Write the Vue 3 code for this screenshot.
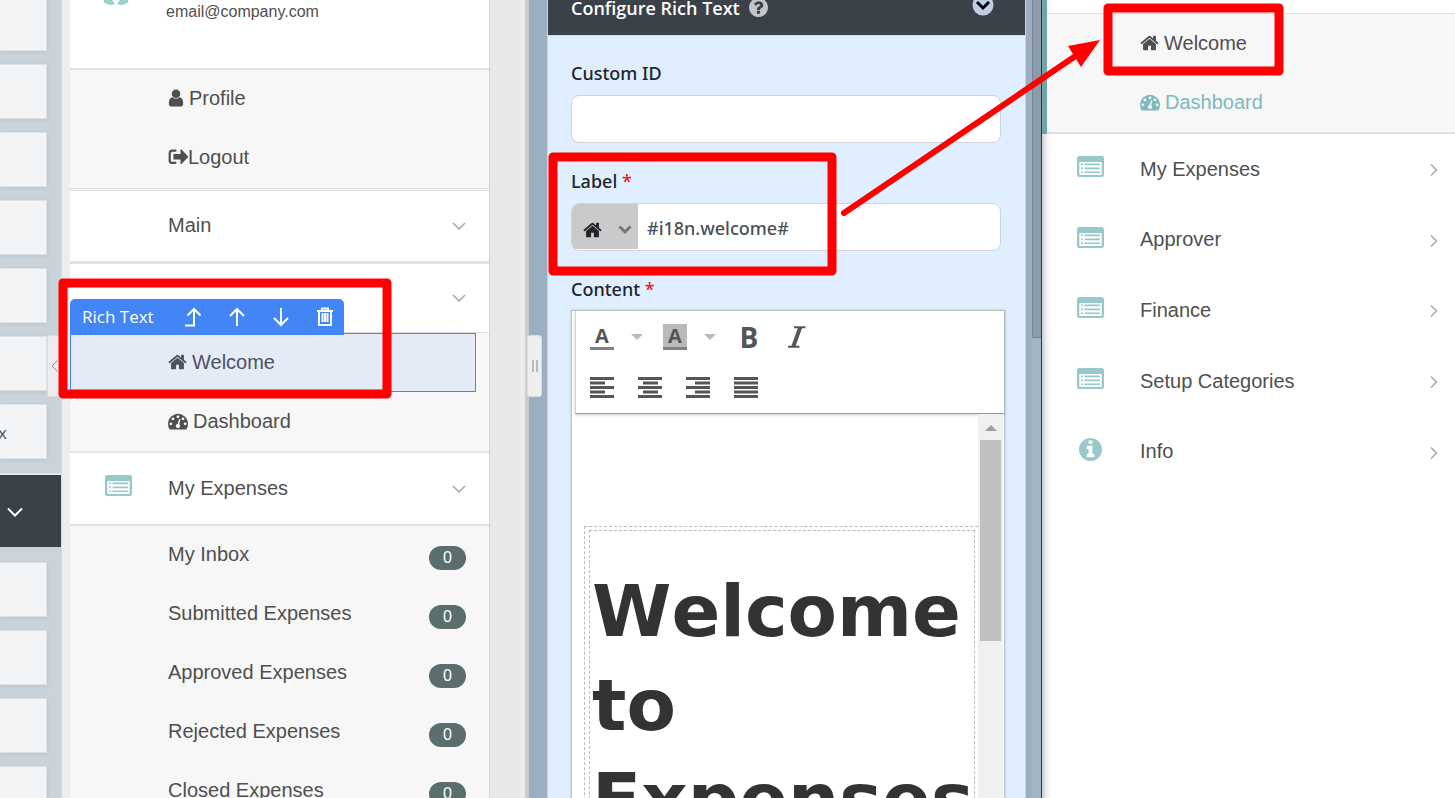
<script setup>
import { ref } from 'vue'

const faCircle = 'm384 192q0 209-103 385.5t-279.5 279.5-385.5 103-385.5-103-279.5-279.5-103-385.5 103-385.5 279.5-279.5 385.5-103 385.5 103 279.5 279.5 103 385.5z'
const icons = {
  home: { box: '64 0 1664 1792', w: 19, d: 'M1472 992v480q0 26-19 45t-45 19h-384v-384h-256v384h-384q-26 0-45-19t-19-45v-480q0-1 .5-3t.5-3l575-474 575 474q1 2 1 6zm223-69l-62 74q-8 9-21 11h-3q-13 0-21-7l-692-577-692 577q-12 8-24 7-13-2-21-11l-62-74q-8-10-7-23.5t11-21.5l719-599q32-26 76-26t76 26l244 204v-195q0-14 9-23t23-9h192q14 0 23 9t9 23v408l219 182q10 8 11 21.5t-7 23.5z' },
  user: { box: '256 0 1280 1792', w: 16, d: 'M1536 1399q0 109-62.5 187t-150.5 78h-854q-88 0-150.5-78t-62.5-187q0-85 8.5-160.5t31.5-152 58.5-131 94-89 134.5-34.5q131 128 313 128t313-128q76 0 134.5 34.5t94 89 58.5 131 31.5 152 8.5 160.5zm-256-887q0 159-112.5 271.5t-271.5 112.5-271.5-112.5-112.5-271.5 112.5-271.5 271.5-112.5 271.5 112.5 112.5 271.5z' },
  gauge: { box: '0 0 1792 1792', w: 20, d: 'M384 1152q0-53-37.5-90.5t-90.5-37.5-90.5 37.5-37.5 90.5 37.5 90.5 90.5 37.5 90.5-37.5 37.5-90.5zm192-448q0-53-37.5-90.5t-90.5-37.5-90.5 37.5-37.5 90.5 37.5 90.5 90.5 37.5 90.5-37.5 37.5-90.5zm428 481l101-382q6-26-7.5-48.5t-38.5-29.5-48 6.5-30 39.5l-101 382q-60 5-107 43.5t-63 98.5q-20 77 20 146t117 89 146-20 89-117q16-60-6-117t-72-91zm660-33q0-53-37.5-90.5t-90.5-37.5-90.5 37.5-37.5 90.5 37.5 90.5 90.5 37.5 90.5-37.5 37.5-90.5zm-640-640q0-53-37.5-90.5t-90.5-37.5-90.5 37.5-37.5 90.5 37.5 90.5 90.5 37.5 90.5-37.5 37.5-90.5zm448 192q0-53-37.5-90.5t-90.5-37.5-90.5 37.5-37.5 90.5 37.5 90.5 90.5 37.5 90.5-37.5 37.5-90.5zm320 448q0 261-141 483-19 29-54 29h-1402q-35 0-54-29-141-221-141-483 0-182 71-348t191-286 286-191 348-71 348 71 286 191 191 286 71 348z' },
  info: { box: '128 128 1536 1536', d: 'M1152 1376v-160q0-14-9-23t-23-9h-96v-512q0-14-9-23t-23-9h-320q-14 0-23 9t-9 23v160q0 14 9 23t23 9h96v320h-96q-14 0-23 9t-9 23v160q0 14 9 23t23 9h448q14 0 23-9t9-23zm-128-896v-160q0-14-9-23t-23-9h-192q-14 0-23 9t-9 23v160q0 14 9 23t23 9h192q14 0 23-9t9-23zm640 416q0 209-103 385.5t-279.5 279.5-385.5 103-385.5-103-279.5-279.5-103-385.5 103-385.5 279.5-279.5 385.5-103 385.5 103 279.5 279.5 103 385.5z' },
  help: { box: '128 128 1536 1536', d: 'M1024 1376v-192q0-14-9-23t-23-9h-192q-14 0-23 9t-9 23v192q0 14 9 23t23 9h192q14 0 23-9t9-23zm256-672q0-88-55.5-163t-138.5-116-170-41q-243 0-371 213-15 24 8 42l132 100q7 6 19 6 16 0 25-12 53-68 86-92 34-24 86-24 48 0 85.5 26t37.5 59q0 38-20 61t-68 45q-63 28-115.5 86.5t-52.5 125.5v36q0 14 9 23t23 9h192q14 0 23-9t9-23q0-19 21.5-49.5t54.5-49.5q32-18 49-28.5t46-35 44.5-48 28-60.5 12.5-81z' + faCircle },
}

const upperCards = ['', '', '', '', '', '', 'x']
const lowerCards = ['', '', '', '']
const inboxes = ['My Inbox', 'Submitted Expenses', 'Approved Expenses', 'Rejected Expenses', 'Closed Expenses']
const previewItems = [
  { name: 'My Expenses', icon: 'list' },
  { name: 'Approver', icon: 'list' },
  { name: 'Finance', icon: 'list' },
  { name: 'Setup Categories', icon: 'list' },
  { name: 'Info', icon: 'info' },
]
const aligns = [
  { name: 'Align left', x: 0, w: 15 },
  { name: 'Align center', x: 5, w: 15 },
  { name: 'Align right', x: 9, w: 15 },
  { name: 'Justify', x: 0, w: 24 },
]
const customId = ref('')
const label = ref('#i18n.welcome#')
</script>

<template>
  <div class="app">
    <svg class="defs" aria-hidden="true">
      <symbol id="i-list" viewBox="0 0 27 21">
        <path fill-rule="evenodd" d="M2.5 0h22A2.500 2.500 0 0 1 27 2.500v16A2.500 2.500 0 0 1 24.500 21h-22A2.500 2.500 0 0 1 0 18.500v-16A2.500 2.500 0 0 1 2.500 0zM3 6q-.7 0-.7.7v11.600q0 .7.7.7h21q.7 0 .7-.7V6.700q0-.7-.7-.7z" />
        <path d="M4 7.600h2v1.700H4zM7.500 7.600H23v1.700H7.500zM4 11.600h2v1.700H4zM7.500 11.600H23v1.700H7.500zM4 15.400h2v1.700H4zM7.500 15.400H23v1.700H7.500z" />
      </symbol>
      <symbol id="i-down" viewBox="0 0 14 8">
        <path d="M1 1l6 6 6-6" fill="none" stroke="currentColor" stroke-width="1.500" />
      </symbol>
    </svg>

    <aside class="palette">
      <div v-for="(c, i) in upperCards" :key="'u' + i" class="card">{{ c }}</div>
      <button class="group" aria-label="Toggle group">
        <svg width="16" height="10" viewBox="0 0 16 10"><path d="M1 1.500l7 7 7-7" fill="none" stroke="#fff" stroke-width="2" /></svg>
      </button>
      <div v-for="(c, i) in lowerCards" :key="'l' + i" class="card">{{ c }}</div>
      <button class="collapse" aria-label="Collapse palette">
        <svg width="7" height="12" viewBox="0 0 7 12"><path d="M6.500.5L1 6l5.500 5.500" fill="none" stroke="#888" /></svg>
      </button>
    </aside>

    <main class="builder">
      <nav class="phone">
        <div class="account">
          <svg class="avatar" width="24" height="6" viewBox="0 0 24 6"><path d="M0 0h8l3 4-3 1Q3 4.500 0 2.500zM24 0h-8l-3 4 3 1q5-.5 8-2.500z" /></svg>
          <span>email@company.com</span>
        </div>
        <div class="sub first">
          <a href="#" class="item gap"><svg :width="icons.user.w" height="20" :viewBox="icons.user.box"><path :d="icons.user.d" /></svg>Profile</a>
          <a href="#" class="item"><svg width="20" height="16" viewBox="0 0 20 16"><path d="M7.500 1.700H4A2.300 2.300 0 0 0 1.700 4v7.500A2.300 2.300 0 0 0 4 13.800h3.500" fill="none" stroke="currentColor" stroke-width="2.200" stroke-linecap="round" /><path d="M6 5h6.500V1q0-1 1-.5L20 7.200q.3.500 0 1L13.500 15q-1 .5-1-.5v-4H6q-.6 0-.6-.6V5.600Q5.400 5 6 5z" /></svg>Logout</a>
        </div>
        <a href="#" class="section thick">Main<svg class="chev" width="14" height="8"><use href="#i-down" /></svg></a>
        <a href="#" class="section short" aria-label="Section"><svg class="chev" width="14" height="8"><use href="#i-down" /></svg></a>
        <div class="sub second">
          <div class="selected">
            <div class="tools">
              <span>Rich Text</span>
              <button aria-label="Select parent"><svg width="18" height="20" viewBox="0 0 18 20"><path d="M1 18.500h9V2M3.500 8.500L10 2l6.500 6.500" /></svg></button>
              <button aria-label="Move up"><svg width="18" height="20" viewBox="0 0 18 20"><path d="M9 19V2M2 9l7-7 7 7" /></svg></button>
              <button aria-label="Move down"><svg width="18" height="20" viewBox="0 0 18 20"><path d="M9 1v17M2 11l7 7 7-7" /></svg></button>
              <button aria-label="Delete"><svg width="18" height="20" viewBox="0 0 18 20"><path d="M1 4h16M6 3V1.500h6V3M3 4v14h12V4M6.500 6v9M9 6v9M11.500 6v9" /></svg></button>
            </div>
            <a href="#" class="item gap"><svg :width="icons.home.w" height="20" :viewBox="icons.home.box"><path :d="icons.home.d" /></svg>Welcome</a>
          </div>
          <a href="#" class="item gap"><svg :width="icons.gauge.w" height="20" :viewBox="icons.gauge.box"><path :d="icons.gauge.d" /></svg>Dashboard</a>
        </div>
        <a href="#" class="section mid"><svg class="lead" width="27" height="21"><use href="#i-list" /></svg>My Expenses<svg class="chev" width="14" height="8"><use href="#i-down" /></svg></a>
        <div class="sub third">
          <a v-for="n in inboxes" :key="n" href="#" class="item">{{ n }}<span class="badge">0</span></a>
        </div>
      </nav>
      <div class="gutter"></div>
    </main>

    <section class="config">
      <button class="splitter" aria-label="Resize panel"><i></i><i></i></button>
      <div class="panel">
        <header>
          <h2>Configure Rich Text</h2>
          <svg class="help" width="19" height="19" :viewBox="icons.help.box"><path :d="icons.help.d" /></svg>
          <button class="toggle" aria-label="Collapse section"><svg width="22" height="22" viewBox="0 0 22 22"><circle cx="11" cy="11" r="10.500" fill="#bcd0e5" /><path d="M5 8l6 6 6-6" fill="none" stroke="#000" stroke-width="3" /></svg></button>
        </header>
        <form @submit.prevent>
          <div class="field">
            <label for="cid">Custom ID</label>
            <input id="cid" v-model="customId" class="box" type="text" />
          </div>
          <div class="field">
            <label for="lbl">Label <b>*</b></label>
            <div class="box combo">
              <button type="button" aria-label="Choose icon">
                <svg class="dark" :width="icons.home.w" height="20" :viewBox="icons.home.box"><path :d="icons.home.d" /></svg>
                <svg width="14" height="10" viewBox="0 0 14 10"><path d="M1.500 1.500L7 7l5.500-5.500" fill="none" stroke="#777" stroke-width="3" /></svg>
              </button>
              <input id="lbl" v-model="label" type="text" />
            </div>
          </div>
          <div class="field grow">
            <label for="content">Content <b>*</b></label>
            <div class="editor">
              <div class="bar">
                <div class="line">
                  <button type="button" class="ink" aria-label="Text color">A</button>
                  <button type="button" class="caret" aria-label="Text color options"></button>
                  <button type="button" class="ink fill" aria-label="Background color">A</button>
                  <button type="button" class="caret" aria-label="Background color options"></button>
                  <button type="button" class="bold">B</button>
                  <button type="button" class="ital" aria-label="Italic">
                    <svg width="20" height="22" viewBox="0 0 20 22"><path d="M7 1.200h11.500M1 20.800h11.500" stroke="currentColor" stroke-width="2" /><path d="M11.200 1h4.200L8.300 21H4.100z" /></svg>
                  </button>
                </div>
                <div class="line aligns">
                  <button v-for="a in aligns" :key="a.name" type="button" :aria-label="a.name">
                    <svg width="24" height="21" viewBox="0 0 24 21">
                      <path d="M0 0h24v3H0zM0 9h24v3H0zM0 18h24v3H0z" />
                      <path :d="`M${a.x} 4.500h${a.w}v3h-${a.w}zM${a.x} 13.500h${a.w}v3h-${a.w}z`" />
                    </svg>
                  </button>
                </div>
              </div>
              <div class="canvas">
                <div id="content" class="doc">
                  <div class="outer"><div class="inner"><h1>Welcome to Expenses</h1></div></div>
                </div>
                <div class="scroll"><span class="up"></span><span class="thumb"></span></div>
              </div>
            </div>
          </div>
        </form>
      </div>
      <div class="track"><span></span></div>
    </section>

    <nav class="preview">
      <div class="open">
        <a href="#" class="item gap"><svg :width="icons.home.w" height="20" :viewBox="icons.home.box"><path :d="icons.home.d" /></svg>Welcome</a>
        <a href="#" class="item gap active"><svg :width="icons.gauge.w" height="20" :viewBox="icons.gauge.box"><path :d="icons.gauge.d" /></svg>Dashboard</a>
      </div>
      <div class="list">
        <a v-for="p in previewItems" :key="p.name" href="#" class="section">
          <svg v-if="p.icon === 'list'" class="lead" width="27" height="21"><use href="#i-list" /></svg>
          <svg v-else class="lead" width="27" height="23" :viewBox="icons.info.box"><path :d="icons.info.d" /></svg>
          {{ p.name }}
          <svg class="chev" width="8" height="12" viewBox="0 0 8 12"><path d="M1 .5L6.500 6 1 11.500" fill="none" stroke="currentColor" stroke-width="1.500" /></svg>
        </a>
      </div>
    </nav>

    <svg class="marks" viewBox="0 0 1455 798" preserveAspectRatio="xMinYMin meet" aria-hidden="true">
      <g fill="none" stroke="#f00" stroke-width="9" stroke-linejoin="round">
        <rect x="63" y="283" width="324" height="111" />
        <rect x="553" y="157" width="279" height="114" />
        <rect x="1108" y="8" width="171" height="63" />
      </g>
      <path d="M844 213L1077 55" stroke="#f00" stroke-width="6" stroke-linecap="round" />
      <path d="M1100 40L1068 46L1081 67z" fill="#f00" />
    </svg>
  </div>
</template>

<style>
body { margin: 0; }
</style>

<style scoped>
* { box-sizing: border-box; }
.app { position: relative; display: grid; grid-template-columns: 62px 467fr 513fr 413fr; height: 100vh; overflow: hidden; background: #fff; font-family: "Liberation Sans", Arial, sans-serif; color: #4f4f4f; }
button { padding: 0; border: 0; background: none; font: inherit; color: inherit; }
a { color: inherit; text-decoration: none; }
svg { flex: none; fill: currentColor; }
.defs { position: absolute; width: 0; height: 0; }
.marks { position: absolute; left: 0; top: 0; width: 100%; z-index: 5; pointer-events: none; }

.palette { position: relative; margin-top: -4px; background: #cbd3da; border-right: 1px solid #d9dbdc; }
.card { height: 55px; width: 47px; margin-bottom: 13px; background: #f3f4f6; border: 1px solid #dfe2e4; border-left: 0; box-shadow: 0 1px 4px rgba(0, 0, 0, 0.08); font: 17px/55px "Open Sans", sans-serif; color: #4a4f55; text-indent: -2px; }
.group { display: flex; align-items: center; width: 61px; height: 74px; margin: 14px 0 15px; padding: 1px 0 0 7px; background: #3a4148; border-top: 2px solid #e6eaee; }
.collapse { position: absolute; left: 47px; top: 339px; width: 15px; height: 62px; display: flex; align-items: center; padding-left: 3px; background: #ededed; border: 1px solid #ddd; border-right: 0; border-radius: 3px 0 0 3px; }

.builder { min-width: 0; display: flex; padding-left: 8px; background: #ededed; }
.phone { flex: 1; background: #fff; border-right: 1px solid #cdd5d5; font-size: 20px; }
.gutter { width: 39px; background: linear-gradient(90deg, #e8e8e8 0 30px, #ececec 31px 34px, #dcdcdc 35px, #cacaca 36px 39px); }
.account { position: relative; height: 68px; padding: 3px 0 0 96px; font-size: 16px; line-height: 18px; }
.avatar { position: absolute; left: 34px; top: 0; color: #9bd0c9; }
.sub { background: #f7f7f7; }
.first { border-top: 2px solid #dfdfdf; border-bottom: 3px double #dcdcdc; }
.second { border-top: 1px solid #dfdfdf; border-bottom: 2px solid #e5e5e5; }
.third { border-top: 2px solid #e2e2e2; }
.item { display: flex; align-items: center; height: 59px; padding: 0 0 3px 98px; font-size: 20px; }
.second .item, .open .item { padding-bottom: 1px; }
.gap { gap: 5px; }
.section { position: relative; display: flex; align-items: center; height: 72px; padding: 0 0 2px 98px; font-size: 20px; }
.thick { height: 73px; border-bottom: 3px solid #e3e3e3; }
.short { height: 68px; }
.mid { height: 71px; padding-bottom: 1px; }
.chev { position: absolute; right: 23px; margin-top: 2px; color: #a8a8a8; }
.lead { position: absolute; left: 35px; margin-bottom: 5px; color: #97c8ca; }
.badge { margin: 7px 23px 0 auto; width: 37px; height: 24px; border-radius: 12px; background: #5a6e6e; color: #fff; font-size: 16px; line-height: 24px; text-align: center; }
.selected { position: relative; height: 59px; margin-right: 13px; background: #e4eaf6; border: 1px solid #4285f4; color: #4c5260; }
.selected .item { padding-left: 97px; height: 57px; }
.tools { position: absolute; left: -1px; top: -35px; width: 274px; height: 36px; display: flex; align-items: center; padding: 0 10px 0 12px; background: #4285f4; border-radius: 5px 5px 0 0; color: #fff; font: 17px "Open Sans", sans-serif; }
.tools span { flex: 1; padding-bottom: 2px; }
.tools button { display: flex; margin-left: 26px; }
.tools svg { fill: none; stroke: #fff; stroke-width: 2; }

.config { position: relative; min-width: 0; display: flex; padding-left: 18px; background: #9bafc0; border-right: 1px solid #30353b; }
.splitter { position: absolute; left: -2px; top: 335px; width: 15px; height: 62px; display: flex; align-items: center; justify-content: center; gap: 2px; background: #eee; border: 1px solid #ddd; border-radius: 3px; }
.splitter i { width: 2px; height: 12px; background: #bbb; }
.panel { flex: 1; min-width: 0; display: flex; flex-direction: column; background: #dfefff; border: solid #c8d4de; border-width: 0 1px; font-family: "Open Sans", "Noto Sans", sans-serif; }
.panel header { display: flex; align-items: center; gap: 9px; height: 36px; padding: 0 31px 20px 23px; background: #3a4148; border-bottom: 1px solid #d3dce4; }
h2 { margin: 0; font-size: 18px; line-height: 22px; font-weight: 600; color: #fff; white-space: nowrap; }
.help { color: #c3c6c9; }
.toggle { margin: 0 0 6px auto; display: flex; }
form { flex: 1; display: flex; flex-direction: column; gap: 24px; padding: 23px 24px 0 23px; }
.field { display: flex; flex-direction: column; gap: 8px; }
.field.grow { flex: 1; gap: 7px; }
label { font: 500 18px/28px "Noto Sans", "Open Sans", sans-serif; color: #212529; }
label b { font-weight: 400; color: #f00; }
.box { height: 48px; width: 100%; border: 1px solid #ced4da; border-radius: 8px; background: #fff; overflow: hidden; }
.combo { display: flex; }
.combo button { flex: none; width: 66px; height: 45px; display: flex; align-items: center; gap: 16px; padding: 6px 0 0 11px; background: #cacaca; }
.dark { color: #212529; }
.combo input { flex: 1; min-width: 0; border: 0; padding: 1px 9px 0; font: 500 18px "Noto Sans", "Open Sans", sans-serif; color: #495057; background: none; }
.editor { flex: 1; display: flex; flex-direction: column; margin-right: -4px; border: 1px solid #c3c3c3; border-bottom: 0; background: #fff; box-shadow: 0 0 3px rgba(0, 0, 0, 0.15); }
.bar { margin-left: 3px; height: 103px; padding: 0 0 0 14px; border-left: 1px solid #d5d5d5; border-bottom: 1px solid #999; box-shadow: 0 1px 3px rgba(0, 0, 0, 0.2); color: #555; }
.line { display: flex; align-items: center; height: 52px; }
.aligns { height: 48px; gap: 24px; }
.aligns button { display: flex; }
.ink { width: 24px; height: 26px; border-bottom: 3px solid #808080; font: bold 20px/23px "Open Sans", sans-serif; }
.fill { background: #bababa; }
.caret { margin: 0 20px 0 17px; border: solid transparent; border-width: 6px 6px 0; border-top-color: #b5bcc2; }
.bold { margin-left: 3px; width: 20px; font: bold 28px/30px "Open Sans", sans-serif; }
.ital { margin-left: 28px; display: flex; }
.canvas { flex: 1 1 0; min-height: 0; display: flex; overflow: hidden; }
.doc { flex: 1; min-width: 0; overflow: hidden; padding: 112px 0 0 12px; }
.outer { border: 1px dashed #bbb; border-right: 0; padding: 3px 3px 0 4px; }
.inner { border: 1px dashed #bbb; padding: 33px 0 0 2px; height: 400px; }
h1 { margin: 0; font: bold 72px/94px "DejaVu Sans", Verdana, sans-serif; font-kerning: none; color: #333; }
.scroll { width: 25px; margin-right: 1px; background: #f0f0f0; display: flex; flex-direction: column; align-items: center; }
.up { margin: 11px 0 9px; border: solid transparent; border-width: 0 6px 6px; border-bottom-color: #a0a0a0; }
.thumb { width: 21px; height: 201px; background: #c0c0c0; }
.track { width: 15px; padding-left: 6px; background: linear-gradient(90deg, #9bafc0 6px, #a4b6c6 6px); }
.track span { display: block; height: 338px; background: #8d9ba9; border: 1px solid #73869a; border-width: 0 0 1px 1px; }

.preview { position: relative; padding-top: 13px; background: linear-gradient(90deg, #ccc, #f3f3f3 5px, #fff 11px); }
.open { position: relative; background: #f7f7f7; border: solid #dfdfdf; border-width: 1px 0 2px; }
.open::before { content: ""; position: absolute; left: 0; top: -14px; width: 5px; height: 134px; background: #6fa5a8; }
.active { color: #7fb8bd; }
.list { display: grid; grid-auto-rows: 1fr; height: 353px; }
.list .section { height: auto; padding-bottom: 0; }
.list .chev { right: 17px; }
</style>
